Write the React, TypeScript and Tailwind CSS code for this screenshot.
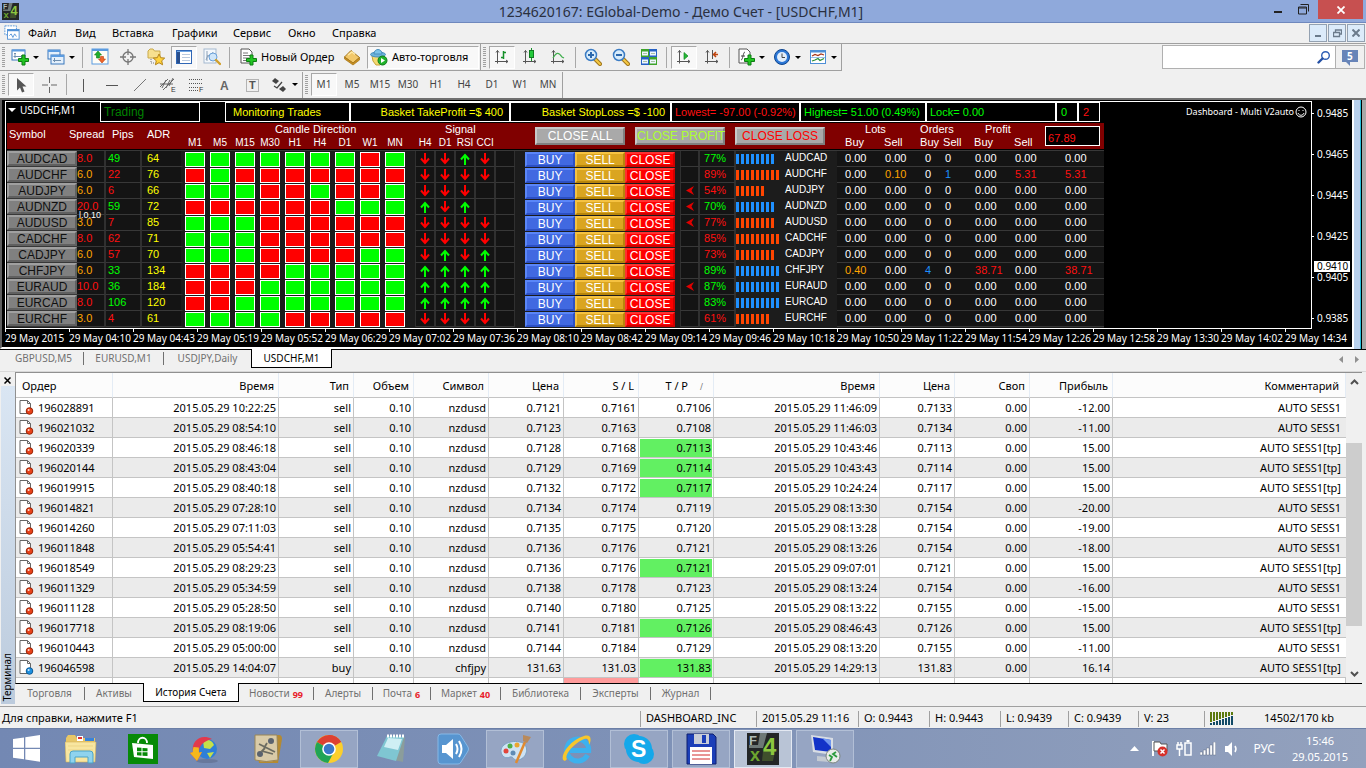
import React from "react";

type Kids = { children?: React.ReactNode };

/* ---------- icons ---------- */

function Icon({ children, size = 18, label }: Kids & { size?: number; label?: string }) {
  return (
    <svg width={size} height={size} viewBox="0 0 18 18" fill="none" className="shrink-0" role="img" aria-label={label}>
      {children}
    </svg>
  );
}

const Plus = () => <path d="M11 7h3v3.500h3.500v3H14V17h-3v-3.500H7.500v-3H11z" fill="#22c422" stroke="#0c7d12" strokeWidth="1" />;
const Axes = () => <path d="M4.500 2.500v13M2 13.500h13M3 4.500l1.500-2 1.500 2M13 12l2 1.500-2 1.500" stroke="#555" />;
const Magnifier = ({ plus, minus }: { plus?: boolean; minus?: boolean }) => (
  <>
    <path d="M11 11l5 5" stroke="#a0761c" strokeWidth="4" strokeLinecap="round" />
    <path d="M11 11l5 5" stroke="#f5c944" strokeWidth="2" strokeLinecap="round" />
    <circle cx="7" cy="7" r="5.500" fill="#d8ecfb" stroke="#3b7cc4" strokeWidth="1.500" />
    {(plus || minus) && <path d="M4 7h6" stroke="#2b68ad" strokeWidth="2" />}
    {plus && <path d="M7 4v6" stroke="#2b68ad" strokeWidth="2" />}
  </>
);

const icons = {
  newChart: (
    <>
      <rect x="1" y="2" width="13" height="10" fill="#fff" stroke="#3a78bd" />
      <path d="M1 2.500h13" stroke="#5b9be0" strokeWidth="2" />
      <path d="M4 10V5M2.500 8.500h9M3 6l1-1 1 1M10 7l1.500 1.500L10 10" stroke="#6f8fb0" />
      <Plus />
    </>
  ),
  profiles: (
    <>
      <rect x="1" y="2" width="12" height="9" fill="#e4f0fc" stroke="#3a78bd" />
      <path d="M1 3h12" stroke="#5b9be0" strokeWidth="2" />
      <rect x="4" y="7" width="13" height="9" fill="#e4f0fc" stroke="#3a78bd" />
      <path d="M4 8h13" stroke="#5b9be0" strokeWidth="2" />
      <path d="M6 12.500h8M7.500 10v4" stroke="#6f8fb0" />
    </>
  ),
  market: (
    <>
      <rect x="1" y="1" width="16" height="15" fill="#fffdf6" stroke="#5b9be0" />
      <path d="M1 2h16" stroke="#5b9be0" strokeWidth="2" />
      <path d="M7 3l3.500 4H8.500v3h-3V7h-2z" fill="#1fae2b" stroke="#0c7d12" strokeWidth=".6" />
      <path d="M11 15l-3.500-4h2V8.500h3V11h2z" fill="#f0662a" stroke="#b53c10" strokeWidth=".6" />
    </>
  ),
  target: (
    <g stroke="#777" strokeWidth="1.300">
      <circle cx="9" cy="9" r="5" />
      <path d="M9 1v6M9 11v6M1 9h6M11 9h6" />
    </g>
  ),
  folderStar: (
    <>
      <path d="M1 3l2-2h3l1.500 2H13v7H1z" fill="#f7e08f" stroke="#c9a94a" />
      <path d="M4 11v4h3" stroke="#777" strokeDasharray="1 1" />
      <path d="M12 6l1.700 3.700 4 .4-3 2.700.9 4L12 14.700 8.400 16.800l.9-4-3-2.700 4-.4z" fill="#ffd23c" stroke="#b5851a" />
    </>
  ),
  dataWindow: (
    <>
      <rect x="1.500" y="2.500" width="15" height="13" fill="#fff" stroke="#2f66b5" />
      <rect x="2" y="3" width="3" height="12" fill="#2a4f8c" />
      <path d="M7 6.500h8M7 9.500h8M7 12.500h8" stroke="#b9c9de" />
      <path d="M2 3.500h14" stroke="#6fa7e6" />
    </>
  ),
  tester: (
    <>
      <rect x="1" y="1" width="12" height="14" fill="#f4f8fc" stroke="#a5b9cf" />
      <path d="M3 12l2-5 2 3 3-6M4 3v10" stroke="#8ba0b7" />
      <circle cx="10" cy="9" r="4" fill="#cfe6fa" stroke="#6aa0d8" />
      <path d="M13 12l4 4" stroke="#d1a02c" strokeWidth="2.400" strokeLinecap="round" />
    </>
  ),
  newOrder: (
    <>
      <path d="M2 1h8l3 3v11H2z" fill="#fff" stroke="#555" />
      <path d="M4 5h5M4 7.500h7M4 10h6M4 12.500h3" stroke="#777" />
      <Plus />
    </>
  ),
  gold: (
    <>
      <path d="M1.500 9L8 2.500l8.500 7-6.500 5.500z" fill="#f2c86a" stroke="#a2741a" />
      <path d="M1.500 9v2l8.500 6 6.500-5v-2.500L10 15z" fill="#c98f1e" stroke="#a2741a" strokeWidth=".7" />
      <path d="M5 7l4-3 3 2.500" stroke="#ffeaa8" strokeWidth="1.500" />
    </>
  ),
  robot: (
    <>
      <path d="M2 8h12v4l-4 5H6l-3-4z" fill="#f4d970" stroke="#c9a43a" />
      <ellipse cx="8" cy="6.500" rx="7.500" ry="2.500" fill="#6db3dc" stroke="#4a90bd" />
      <path d="M4 6c0-6 8-6 8 0z" fill="#7fc4ea" stroke="#4a90bd" />
      <circle cx="12.500" cy="12.500" r="4.500" fill="#20b32b" stroke="#0d7a17" />
      <path d="M11 10l4 2.500-4 2.500z" fill="#fff" />
    </>
  ),
  bars: (<><Axes /><path d="M10.500 3v8M8 9.500h2.500M10.500 4.500H13" stroke="#16912a" strokeWidth="1.500" /></>),
  candle: (<><Axes /><path d="M10.500 0v13" stroke="#16912a" /><rect x="8.500" y="2.500" width="4" height="7" fill="#22c93a" stroke="#0e7d1f" /></>),
  line: (<><Axes /><path d="M4 10c3-5 5-7 9-1l2 1" stroke="#3fae4c" strokeWidth="1.300" /></>),
  zoomIn: <Magnifier plus />,
  zoomOut: <Magnifier minus />,
  tiles: (
    <>
      <rect x="1" y="1" width="8" height="8" fill="#3ea32b" /><rect x="9" y="1" width="8" height="8" fill="#2661c4" />
      <rect x="1" y="9" width="8" height="8" fill="#2661c4" /><rect x="9" y="9" width="8" height="8" fill="#3ea32b" />
      <path d="M2 5.500h6M10 5.500h6M2 13.500h6M10 13.500h6" stroke="#eef5ff" strokeWidth="4" />
      <path d="M3 5.500h4M11 5.500h4M3 13.500h4M11 13.500h4" stroke="#a9c4a4" />
    </>
  ),
  scroll: (<><Axes /><path d="M9 4.500l4 3.500-4 3.500z" fill="#25b836" stroke="#128a20" strokeWidth=".7" /></>),
  shift: (<><Axes /><path d="M9.500 2v9" stroke="#555" /><path d="M15 6.500h-4M13 4l-2.500 2.500L13 9" stroke="#c0440e" strokeWidth="1.500" /></>),
  indicator: (
    <>
      <path d="M2 1h8l3 3v11H2z" fill="#fff" stroke="#555" />
      <path d="M4 12c2 0 2-8 4-8M4 8h4" stroke="#444" />
      <Plus />
    </>
  ),
  clock: (
    <>
      <circle cx="9" cy="9" r="7.500" fill="#2c77d6" stroke="#0f468f" />
      <circle cx="9" cy="9" r="5" fill="#e2eefb" />
      <path d="M9 5.500V9.500h3" stroke="#444" />
    </>
  ),
  template: (
    <>
      <rect x="1.500" y="2.500" width="15" height="13" fill="#fff" stroke="#4d8fd6" />
      <path d="M1.500 3.500h15" stroke="#4d8fd6" strokeWidth="2" />
      <path d="M3 8l3-1.500 3 1 3-1.500 3 1" stroke="#a8361a" strokeWidth="1.300" />
      <path d="M3 13l3-1 3-1.500 2 2 4-2" stroke="#2a8f34" strokeWidth="1.300" />
      <path d="M2 9.500h14" stroke="#9cc0ea" />
    </>
  ),
  cursor: <path d="M5 2v12.500l3-3 2 5 2.500-1-2-5h4z" fill="#555" />,
  cross: <path d="M9.500 1v6M9.500 11v6M2 9h6M11 9h6" stroke="#666" />,
  vline: <path d="M8.500 3v13" stroke="#555" />,
  hline: <path d="M3 9.500h12" stroke="#555" />,
  trend: <path d="M3 15L15 3" stroke="#777" />,
  channel: (
    <>
      <path d="M1 11l8-8M4 14L15 3M1 8h13M3 12L7 4M7 12l4-8M10 10l4-8" stroke="#666" />
      <text x="12" y="16" fontSize="7" fill="#333" fontFamily="Liberation Sans">E</text>
    </>
  ),
  fibo: (
    <>
      <path d="M2 3.500h13M2 7.500h13M2 11.500h9M2 14.500h9" stroke="#555" strokeDasharray="1 1" />
      <text x="12" y="16" fontSize="7" fill="#333" fontFamily="Liberation Sans">F</text>
    </>
  ),
  textA: <text x="5" y="14" fontSize="12" fontWeight="bold" fill="#666" fontFamily="Liberation Sans">A</text>,
  label: (
    <>
      <rect x="3.500" y="3.500" width="12" height="12" stroke="#777" strokeDasharray="1 1" />
      <text x="6" y="13" fontSize="11" fontWeight="bold" fill="#555" fontFamily="Liberation Sans">T</text>
    </>
  ),
  arrows: (
    <>
      <path d="M2 5l3-3 4 3-3 3z" fill="#444" />
      <path d="M4 10l3 2 5-6" stroke="#444" strokeWidth="1.300" />
      <path d="M9 13l4-3 3 3-3 3z" fill="#444" />
    </>
  ),
};

function FxLogo({ size }: { size: number }) {
  return (
    <svg width={size} height={size} viewBox="0 0 32 32" className="shrink-0" aria-label="FX4" role="img">
      <rect width="32" height="32" fill="#232627" />
      <path d="M13 0h7l-4 15H2v-3h9z" fill="#6d7876" />
      <path d="M16 18h12l-2 10H15z" fill="#3f4f2c" />
      <text x="2" y="12" fontSize="13" fontWeight="bold" fill="#aebbb8" fontFamily="Liberation Sans">F</text>
      <text x="16" y="22" fontSize="24" fontWeight="bold" fill="#8cc63f" fontFamily="Liberation Sans">4</text>
      <text x="3" y="28" fontSize="18" fontWeight="bold" fill="#6da52f" fontFamily="Liberation Sans">x</text>
    </svg>
  );
}

/* ---------- toolbar parts ---------- */

const Grip = () => (
  <span className="mx-[2px] flex h-5 w-[3px] shrink-0 flex-col justify-between">
    {Array.from({ length: 10 }, (_, i) => (
      <span key={i} className="h-px w-full bg-[#a0a0a0]" />
    ))}
  </span>
);
const Sep = () => <span className="mx-[3px] h-[21px] w-px shrink-0 bg-[#a8a8a8]" />;
const Edge = () => <span className="h-[26px] w-px shrink-0 bg-[#a0a0a0]" />;
const Caret = () => (
  <svg width="6" height="3" viewBox="0 0 6 3" className="shrink-0"><path d="M0 0h6L3 3z" fill="#000" /></svg>
);

function Tool({ name, icon, on, menu }: { name: string; icon: React.ReactNode; on?: boolean; menu?: boolean }) {
  return (
    <button
      type="button"
      aria-label={name}
      className={
        "flex h-[23px] shrink-0 items-center justify-center gap-1 " +
        (menu ? "w-9 " : "mx-px w-[26px] ") +
        (on ? "border border-[#a8a8a8] border-r-white border-b-white bg-[#f8f8f8]" : "")
      }
    >
      <Icon>{icon}</Icon>
      {menu && <Caret />}
    </button>
  );
}

const menus = [
  ["Файл", "w-[47px]"], ["Вид", "w-[37px]"], ["Вставка", "w-[60px]"], ["Графики", "w-[61px]"],
  ["Сервис", "w-[55px]"], ["Окно", "w-11"], ["Справка", "w-14"],
];

function TitleBar() {
  return (
    <header className="flex h-[23px] shrink-0 items-start border-b border-[#6f88bd] bg-[#8fa9db]">
      <div className="w-24 pt-[3px] pl-[2px]"><FxLogo size={17} /></div>
      <h1 className="flex-1 pt-px text-center font-['Noto_Sans',sans-serif] text-[14px] leading-[22px] text-[#2a3040]">
        1234620167: EGlobal-Demo - Демо Счет - [USDCHF,M1]
      </h1>
      <div className="flex h-[19px] w-[100px] justify-end pr-[3px]">
        <button type="button" aria-label="Свернуть" className="flex w-5 items-end justify-center pb-[6px]"><span className="h-[2px] w-2 bg-[#222]" /></button>
        <button type="button" aria-label="Восстановить" className="flex w-[30px] items-center justify-center">
          <svg width="11" height="11" viewBox="0 0 11 11" fill="none"><path d="M2.500 .5h8v7M.5 3h8v7h-8zM.5 4h8" stroke="#222" /></svg>
        </button>
        <button type="button" aria-label="Закрыть" className="flex w-[45px] items-center justify-center bg-[#c75050]">
          <svg width="8" height="8" viewBox="0 0 8 8"><path d="M.5 .5l7 7M7.500 .5l-7 7" stroke="#fff" strokeWidth="1.800" /></svg>
        </button>
      </div>
    </header>
  );
}

function MenuBar() {
  const win = "flex h-[18px] w-[18px] items-center justify-center border border-[#93a1b1] bg-[#dcebfa]";
  return (
    <nav className="flex h-[21px] shrink-0 items-center border-b border-[#a0a0a0] bg-[#f0f0f0]">
      <div className="w-7 pl-1">
        <Icon size={16} label="График">
          <rect x="1" y="1" width="13" height="10" fill="#fff" stroke="#4d8fd6" strokeDasharray="2 1" />
          <rect x="4" y="5" width="13" height="11" fill="#fff" stroke="#4d8fd6" />
          <path d="M4 6h13" stroke="#4d8fd6" strokeWidth="2" />
          <path d="M6 12l2-2 2 4 2-4 2 3" stroke="#4d8fd6" />
        </Icon>
      </div>
      {menus.map(([m, w]) => (
        <button key={m} type="button" className={"text-left font-['Noto_Sans',sans-serif] text-[11px] leading-4 text-black " + w}>{m}</button>
      ))}
      <div className="ml-auto flex gap-px pr-px">
        <button type="button" aria-label="Свернуть график" className={win}><span className="mt-[6px] h-[2px] w-[6px] bg-[#6b7b8c]" /></button>
        <button type="button" aria-label="Восстановить график" className={win}>
          <svg width="9" height="9" viewBox="0 0 9 9" fill="none"><path d="M2.500 3V1h6v4H7M.5 3.500h6v4h-6z" stroke="#6b7b8c" strokeWidth="1.300" /></svg>
        </button>
        <button type="button" aria-label="Закрыть график" className={win}>
          <svg width="8" height="8" viewBox="0 0 8 8"><path d="M.5 .5l7 7M7.500 .5l-7 7" stroke="#6b7b8c" strokeWidth="2" /></svg>
        </button>
      </div>
    </nav>
  );
}

function Toolbars() {
  const label = "font-['Noto_Sans',sans-serif] text-[11px] text-black whitespace-nowrap";
  return (
    <div className="flex h-[54px] shrink-0 items-start bg-[#f0f0f0]">
      <div className="flex min-w-0 flex-1 flex-col">
        <div className="flex h-[27px] items-center self-start border-b border-[#a0a0a0]">
          <Grip />
          <Tool name="Новый график" icon={icons.newChart} menu />
          <Tool name="Профили" icon={icons.profiles} menu />
          <Sep />
          <Tool name="Обзор рынка" icon={icons.market} />
          <Tool name="Прицел" icon={icons.target} />
          <Tool name="Навигатор" icon={icons.folderStar} />
          <Tool name="Терминал" icon={icons.dataWindow} on />
          <Tool name="Тестер" icon={icons.tester} />
          <Sep />
          <button type="button" className="flex h-[23px] w-[105px] shrink-0 items-center gap-1 pl-[6px]"><Icon>{icons.newOrder}</Icon><span className={label}>Новый Ордер</span></button>
          <Tool name="Редактор" icon={icons.gold} />
          <button type="button" className="mx-px flex h-[23px] w-[112px] shrink-0 items-center gap-1 border border-[#a8a8a8] border-r-white border-b-white bg-[#f8f8f8] pl-[2px]"><Icon>{icons.robot}</Icon><span className={label}>Авто-торговля</span></button>
          <Edge />
          <Grip />
          <Tool name="Бары" icon={icons.bars} on />
          <Tool name="Свечи" icon={icons.candle} />
          <Tool name="Линия" icon={icons.line} />
          <Sep />
          <Tool name="Увеличить" icon={icons.zoomIn} />
          <Tool name="Уменьшить" icon={icons.zoomOut} />
          <Tool name="Плитка" icon={icons.tiles} />
          <Sep />
          <Tool name="Автопрокрутка" icon={icons.scroll} on />
          <Tool name="Сдвиг" icon={icons.shift} />
          <Sep />
          <Tool name="Индикаторы" icon={icons.indicator} menu />
          <Tool name="Периоды" icon={icons.clock} menu />
          <Tool name="Шаблоны" icon={icons.template} menu />
          <Edge />
        </div>
        <div className="flex h-[27px] items-center">
          <Grip />
          <Tool name="Курсор" icon={icons.cursor} on />
          <Tool name="Перекрестие" icon={icons.cross} />
          <Sep />
          <Tool name="Вертикальная" icon={icons.vline} />
          <Tool name="Горизонтальная" icon={icons.hline} />
          <Tool name="Трендовая" icon={icons.trend} />
          <Tool name="Канал" icon={icons.channel} />
          <Tool name="Фибоначчи" icon={icons.fibo} />
          <Tool name="Текст" icon={icons.textA} />
          <Tool name="Метка" icon={icons.label} />
          <Tool name="Стрелки" icon={icons.arrows} menu />
          <Edge />
          <Grip />
          {["M1", "M5", "M15", "M30", "H1", "H4", "D1", "W1", "MN"].map((t, i) => (
            <button
              key={t}
              type="button"
              className={
                "mx-px h-[23px] w-[26px] shrink-0 text-center font-['Noto_Sans',sans-serif] text-[10px] text-[#444] " +
                (i === 0 ? "border border-[#a8a8a8] border-r-white border-b-white bg-[#f8f8f8]" : "")
              }
            >
              {t}
            </button>
          ))}
          <Edge />
        </div>
      </div>
      <div className="mt-px mr-px flex h-6 w-[203px] shrink-0 border border-[#b0b0b0] bg-white">
        <input aria-label="Поиск" className="min-w-0 flex-1 bg-white px-1 text-xs outline-none" />
        <button type="button" aria-label="Искать" className="w-[18px]">
          <svg width="14" height="14" viewBox="0 0 14 14" fill="none"><circle cx="8.500" cy="5.500" r="3.800" stroke="#2f5fb5" strokeWidth="1.400" /><path d="M5.500 8.500L1.500 12.500" stroke="#2450a5" strokeWidth="2.400" strokeLinecap="round" /></svg>
        </button>
        <button type="button" aria-label="Сообщения" className="flex w-[29px] items-center justify-center border-l border-[#b0b0b0] bg-[#f0f0f0]">
          <svg width="16" height="17" viewBox="0 0 16 17"><path d="M0 1h16v12H8v4l-4-4H0z" fill="#6784b8" /><text x="5" y="11" fontSize="10" fontWeight="bold" fill="#fff" fontFamily="Noto Sans">5</text></svg>
        </button>
      </div>
    </div>
  );
}

/* ---------- chart dashboard ---------- */

const R = "text-[#ff1010]", G = "text-[#00ff00]", O = "text-[#ffa500]", B = "text-[#1e90ff]", W = "text-white";

type Pair = { s: string; spread: string; sc: string; pips: string; pc: string; adr: string; c: string; sig: string; flag?: boolean; pct: string; tc: string; n: number; blue?: boolean };
const pairs: Pair[] = [
  { s: "AUDCAD", spread: "8.0", sc: R, pips: "49", pc: G, adr: "64", c: "111111101", sig: "DDUD", pct: "77%", tc: G, n: 8, blue: true },
  { s: "AUDCHF", spread: "6.0", sc: O, pips: "22", pc: R, adr: "76", c: "010000000", sig: "DDDD", pct: "89%", tc: R, n: 9 },
  { s: "AUDJPY", spread: "6.0", sc: O, pips: "6", pc: R, adr: "66", c: "111001001", sig: "DDD-", flag: true, pct: "54%", tc: R, n: 6 },
  { s: "AUDNZD", spread: "20.0", sc: R, pips: "59", pc: G, adr: "72", c: "000000111", sig: "UDU-", flag: true, pct: "70%", tc: G, n: 8, blue: true },
  { s: "AUDUSD", spread: "3.0", sc: O, pips: "7", pc: R, adr: "85", c: "111000000", sig: "DDDD", flag: true, pct: "77%", tc: R, n: 8 },
  { s: "CADCHF", spread: "8.0", sc: R, pips: "62", pc: R, adr: "71", c: "111000000", sig: "DDDD", pct: "85%", tc: R, n: 9 },
  { s: "CADJPY", spread: "6.0", sc: O, pips: "57", pc: R, adr: "70", c: "111000011", sig: "DUDU", pct: "73%", tc: R, n: 8 },
  { s: "CHFJPY", spread: "6.0", sc: O, pips: "33", pc: G, adr: "134", c: "000011111", sig: "UUUU", pct: "89%", tc: G, n: 9, blue: true },
  { s: "EURAUD", spread: "10.0", sc: R, pips: "36", pc: G, adr: "184", c: "000111111", sig: "UUUU", flag: true, pct: "87%", tc: G, n: 9, blue: true },
  { s: "EURCAD", spread: "8.0", sc: R, pips: "106", pc: G, adr: "120", c: "001111111", sig: "UUUU", pct: "83%", tc: G, n: 9, blue: true },
  { s: "EURCHF", spread: "3.0", sc: O, pips: "4", pc: R, adr: "61", c: "111100000", sig: "DDDD", pct: "61%", tc: R, n: 7 },
];

const money: Record<string, [string, string][]> = {
  AUDCHF: [["0.00", W], ["0.10", O], ["0", W], ["1", B], ["0.00", W], ["5.31", R], ["5.31", R]],
  CHFJPY: [["0.40", O], ["0.00", W], ["4", B], ["0", W], ["38.71", R], ["0.00", W], ["38.71", R]],
};
const flat: [string, string][] = [["0.00", W], ["0.00", W], ["0", W], ["0", W], ["0.00", W], ["0.00", W], ["0.00", W]];
const moneyPad = ["pl-2", "pl-[5px]", "pl-[5px]", "pl-1", "pl-[5px]", "pl-[5px]", "pl-[22px]"];

const Arrow = ({ up }: { up: boolean }) => (
  <svg width="10" height="12" viewBox="0 0 10 12" fill="none" className="mx-auto block">
    {up ? <path d="M5 12V2M1 6.500L5 2l4 4.500" stroke="#0f0" strokeWidth="2" /> : <path d="M5 0v10M1 5.500L5 10l4-4.500" stroke="#f00" strokeWidth="2" />}
  </svg>
);

const cell = "h-4 border-b border-[#383838] bg-[#141414] p-0 text-left leading-[15px]";
const plain = "h-4 bg-[#1c1c1c] p-0";
const cols = [
  "w-[70px]", "w-[29px]", "w-9", "w-[42px]",
  "w-[25px]", "w-[25px]", "w-[25px]", "w-[25px]", "w-[25px]", "w-[25px]", "w-[25px]", "w-[25px]", "w-[31px]",
  "w-5", "w-5", "w-5", "w-5", "w-5", "w-[10px]",
  "w-[50px]", "w-[50px]", "w-[50px]", "w-[5px]",
  "w-5", "w-9", "w-[49px]", "w-[52px]",
  "w-[43px]", "w-10", "w-[21px]", "w-[29px]", "w-10", "w-[33px]", "w-[61px]",
];

function Dashboard() {
  const head = "p-0 text-left font-normal leading-[13px]";
  const big = "h-[18px] w-[90px] shrink-0 whitespace-nowrap border-2 border-t-[#c8c8c8] border-l-[#c8c8c8] border-r-[#808080] border-b-[#808080] bg-[#a9a9a9] text-center text-[12px] leading-[15px]";
  const btn = "block h-[15px] w-full border-2 text-center text-[12px] leading-[12px]";
  return (
    <table className="ml-px w-[1097px] table-fixed border-separate border-spacing-0 text-[11px] text-white">
      <colgroup>{cols.map((w, i) => <col key={i} className={w} />)}</colgroup>
      <thead className="bg-[#800000]">
        <tr className="h-[13px]">
          <th rowSpan={2} className={head + " pb-1 pl-[2px]"}>Symbol</th>
          <th rowSpan={2} className={head + " pb-1"}><span className="-ml-2">Spread</span></th>
          <th rowSpan={2} className={head + " pb-1 pl-[6px]"}>Pips</th>
          <th rowSpan={2} className={head + " pb-1 pl-[5px]"}>ADR</th>
          <th colSpan={9} className={head + " pl-[91px]"}>Candle Direction</th>
          <th colSpan={6} className={head + " pl-[30px]"}>Signal</th>
          <th colSpan={8} rowSpan={2} className={head}>
            <div className="flex gap-[10px] pl-[10px]">
              <button type="button" className={big + " text-white"}>CLOSE ALL</button>
              <button type="button" className={big + " text-[#adff2f]"}>CLOSE PROFIT</button>
              <button type="button" className={big + " text-[#ff0000]"}>CLOSE LOSS</button>
            </div>
          </th>
          <th colSpan={2} className={head + " pl-7"}>Lots</th>
          <th colSpan={2} className={head}>Orders</th>
          <th colSpan={2} className={head + " pl-[15px]"}>Profit</th>
          <th rowSpan={2} className={head}>
            <div className="ml-[2px] h-5 w-[55px] border border-white bg-black pl-[2px] leading-[22px] text-[#ff1010]">67.89</div>
          </th>
        </tr>
        <tr className="h-[13px]">
          {["M1", "M5", "M15", "M30", "H1", "H4", "D1", "W1", "MN"].map((t) => (
            <th key={t} className={head + " whitespace-nowrap"}><span className="block w-[22px] text-center text-[10px]">{t}</span></th>
          ))}
          {["H4", "D1", "RSI", "CCI"].map((t) => <th key={t} className={head}><span className="block text-center text-[10px]">{t}</span></th>)}
          <th className={head} /><th className={head} />
          {["Buy", "Sell", "Buy", "Sell", "Buy", "Sell"].map((t, i) => (
            <th key={i} className={head + (i === 0 ? " pl-2" : i === 2 ? " pl-0" : i === 3 ? " pl-[2px]" : " pl-1")}>{t}</th>
          ))}
        </tr>
      </thead>
      <tbody>
        <tr aria-hidden="true"><td colSpan={34} className="h-[2px] border-t border-black bg-[#383838] p-0" /></tr>
        {pairs.map((p) => (
          <tr key={p.s} className="h-4">
            <td className={cell}>
              <button type="button" className={btn + " border-t-[#a0a0a0] border-l-[#a0a0a0] border-r-[#606060] border-b-[#606060] bg-[#808080] text-[#101010]"}>{p.s}</button>
            </td>
            <td className={cell + " relative border-r-[2px] border-r-[#303030] " + p.sc}>
              {p.spread}
              {p.s === "AUDUSD" && <span className="absolute -top-[6px] left-[2px] text-[9px] leading-3 text-white">l.0.10</span>}
            </td>
            <td className={cell + " border-r-[2px] border-r-[#303030] pl-[2px] " + p.pc}>{p.pips}</td>
            <td className={cell + " border-r-[3px] border-r-[#1c1c1c] pl-[5px] text-[#ffff00]"}>{p.adr}</td>
            {p.c.split("").map((c, i) => (
              <td key={i} className={plain}>
                <span className={"ml-px block h-[15px] w-5 border border-white " + (c === "1" ? "bg-[#00ff00]" : "bg-[#ff0000]")} />
              </td>
            ))}
            {[0, 1, 2, 3, 4].map((i) => (
              <td key={i} className={cell + " border-r border-l border-r-[#303030] border-l-[#303030]"}>
                {p.sig[i] && p.sig[i] !== "-" ? <Arrow up={p.sig[i] === "U"} /> : null}
              </td>
            ))}
            <td className={plain} />
            <td className={plain}><button type="button" className={btn + " border-t-[#5a86f8] border-l-[#5a86f8] border-r-[#2c50c4] border-b-[#2c50c4] bg-[#4169e1]"}>BUY</button></td>
            <td className={plain}><button type="button" className={btn + " border-t-[#f5c242] border-l-[#f5c242] border-r-[#b8860b] border-b-[#b8860b] bg-[#daa520]"}>SELL</button></td>
            <td className={plain}><button type="button" className={btn + " border-t-[#ff3030] border-l-[#ff3030] border-r-[#d00000] border-b-[#d00000] bg-[#ff0000]"}>CLOSE</button></td>
            <td className={plain} />
            <td className={cell + " border-r-2 border-l border-r-[#303030] border-l-[#303030]"}>
              {p.flag && <svg width="8" height="9" viewBox="0 0 8 9" className="ml-[5px] block"><path d="M0 4.500L8 0 5.500 4.500 8 9z" fill="#e00000" /></svg>}
            </td>
            <td className={cell + " border-r-2 border-r-[#303030] pl-1 " + p.tc}>{p.pct}</td>
            <td className={plain}>
              <span className="flex h-[10px] gap-[2px]">
                {Array.from({ length: p.n }, (_, i) => <span key={i} className={"w-[3px] " + (p.blue ? "bg-[#1e90ff]" : "bg-[#ff4500]")} />)}
              </span>
            </td>
            <td className={plain + " align-top text-[10px] leading-[13px]"}>{p.s}</td>
            {(money[p.s] || flat).map(([v, c], i) => (
              <td key={i} className={cell + " " + moneyPad[i] + " " + c}>{v}</td>
            ))}
          </tr>
        ))}
        <tr aria-hidden="true"><td colSpan={34} className="h-[2px] bg-[#1c1c1c] p-0" /></tr>
      </tbody>
    </table>
  );
}

const times = ["2015", "04:10", "04:43", "05:19", "05:52", "06:29", "07:02", "07:36", "08:10", "08:42", "09:14", "09:46", "10:18", "10:50", "11:22", "11:54", "12:26", "12:58", "13:30", "14:02", "14:34"];

function Chart() {
  const box = "flex h-5 shrink-0 items-center border border-white whitespace-nowrap";
  const axis = "font-['Noto_Sans',sans-serif] text-[10px] leading-3 text-white whitespace-nowrap";
  return (
    <section className="flex shrink-0 border-t-2 border-b border-t-[#707070] border-b-black bg-[#f0f0f0] font-['Liberation_Sans',sans-serif]">
      <div className="min-w-0 flex-1 border-b-2 border-l-2 border-b-white border-l-[#606060] bg-black pt-px pl-[3px]">
        <div className="flex">
          <div className="h-[228px] min-w-0 flex-1 overflow-hidden border border-white">
            <div className="flex">
              <div className="flex w-[94px] shrink-0 items-start gap-1 pt-[2px] pl-[2px]">
                <span className="pt-1"><svg width="8" height="4" viewBox="0 0 8 4"><path d="M0 0h8L4 4z" fill="#fff" /></svg></span>
                <span className={axis}>USDCHF,M1</span>
              </div>
              <div className={box + " w-[100px] pl-[3px] text-[12px] text-[#008000]"}>Trading</div>
              <div className="w-[25px] shrink-0" />
              <div className={box + " w-[125px] pl-[7px] text-[11px] text-[#ffff00]"}>Monitoring Trades</div>
              <div className={box + " w-40 justify-end pr-[6px] text-[11px] text-[#ffff00]"}>Basket TakeProfit =$ 400</div>
              <div className={box + " w-[161px] justify-end pr-[5px] text-[11px] text-[#ffff00]"}>Basket StopLoss =$ -100</div>
              <div className={box + " w-[129px] pl-[3px] text-[11px] text-[#ff1010]"}>Lowest= -97.00 (-0.92%)</div>
              <div className={box + " w-[126px] pl-[3px] text-[11px] text-[#00ff00]"}>Highest= 51.00 (0.49%)</div>
              <div className={box + " w-[130px] pl-[3px] text-[11px] text-[#00ff00]"}>Lock= 0.00</div>
              <div className={box + " w-[22px] pl-1 text-[11px] text-[#00ff00]"}>0</div>
              <div className={box + " w-[22px] pl-1 text-[11px] text-[#ff1010]"}>2</div>
              <div className="flex min-w-0 flex-1 items-center justify-end gap-px pr-1">
                <span className="font-['Noto_Sans',sans-serif] text-[9px] leading-3 whitespace-nowrap text-white">Dashboard - Multi V2auto</span>
                <svg width="12" height="12" viewBox="0 0 12 12" fill="none" stroke="#fff"><circle cx="6" cy="6" r="5" /><path d="M3 7c1 3 5 3 6 0M4 4v1M8 4v1" /></svg>
              </div>
            </div>
            <div className="h-px" />
            <Dashboard />
          </div>
          <div className="relative w-10 shrink-0">
            {[["0.9485", "top-[6px]"], ["0.9465", "top-[47px]"], ["0.9445", "top-[88px]"], ["0.9425", "top-[129px]"], ["0.9405", "top-[170px]"], ["0.9385", "top-[211px]"]].map(([v, t]) => (
              <div key={v} className={"absolute left-0 flex items-center gap-[3px] " + t}>
                <span className="h-px w-[2px] bg-white" /><span className={axis}>{v}</span>
              </div>
            ))}
            <div className="absolute top-[160px] left-[2px] w-9 bg-white pl-[3px] font-['Noto_Sans',sans-serif] text-[10px] leading-[11px] text-black">0.9410</div>
          </div>
        </div>
        <div className="flex h-[18px] overflow-hidden">
          {times.map((t) => (
            <div key={t} className="w-16 shrink-0">
              <div className="h-[3px] w-px bg-white" />
              <div className={axis}>29 May {t}</div>
            </div>
          ))}
        </div>
      </div>
      <div className="w-[2px] bg-white" />
      <div className="w-[7px] border-r border-[#27c0dc] bg-[#b8d0ec]" />
      <div className="w-[5px] border-l border-black bg-[#a8a8a8]" />
    </section>
  );
}

function ChartTabs() {
  const tab = "h-[17px] font-['Noto_Sans',sans-serif] text-[10px] leading-[17px] text-[#707070] whitespace-nowrap text-center";
  const bar = "mt-[2px] h-[13px] w-px bg-[#707070]";
  return (
    <div className="flex h-[22px] shrink-0 items-start border-b border-[#d8d8d8] bg-[#f0f0f0]" role="tablist">
      <button type="button" role="tab" className={tab + " ml-1 w-[79px]"}>GBPUSD,M5</button><span className={bar} />
      <button type="button" role="tab" className={tab + " w-[79px]"}>EURUSD,M1</button><span className={bar} />
      <button type="button" role="tab" className={tab + " w-[87px]"}>USDJPY,Daily</button>
      <button type="button" role="tab" aria-selected="true" className="-mt-px h-[19px] w-[81px] border border-t-0 border-black bg-white text-center font-['Noto_Sans',sans-serif] text-[10px] whitespace-nowrap text-black">USDCHF,M1</button>
      <div className="ml-auto flex gap-3 pt-[6px] pr-[7px]">
        <svg width="4" height="7" viewBox="0 0 4 7"><path d="M4 0v7L0 3.500z" fill="#909090" /></svg>
        <svg width="4" height="7" viewBox="0 0 4 7"><path d="M0 0v7l4-3.500z" fill="#909090" /></svg>
      </div>
    </div>
  );
}

/* ---------- terminal ---------- */

const T1 = "2015.05.29 ";
const orders: [string, string, string, string, string, string, string, string, string, string, boolean][] = [
  ["196028891", "10:22:25", "sell", "nzdusd", "0.7121", "0.7161", "0.7106", "11:46:09", "0.7133", "-12.00", false],
  ["196021032", "08:54:10", "sell", "nzdusd", "0.7123", "0.7163", "0.7108", "11:46:03", "0.7134", "-11.00", false],
  ["196020339", "08:46:18", "sell", "nzdusd", "0.7128", "0.7168", "0.7113", "10:43:46", "0.7113", "15.00", true],
  ["196020144", "08:43:04", "sell", "nzdusd", "0.7129", "0.7169", "0.7114", "10:43:43", "0.7114", "15.00", true],
  ["196019915", "08:40:18", "sell", "nzdusd", "0.7132", "0.7172", "0.7117", "10:24:24", "0.7117", "15.00", true],
  ["196014821", "07:28:10", "sell", "nzdusd", "0.7134", "0.7174", "0.7119", "08:13:30", "0.7154", "-20.00", false],
  ["196014260", "07:11:03", "sell", "nzdusd", "0.7135", "0.7175", "0.7120", "08:13:28", "0.7154", "-19.00", false],
  ["196011848", "05:54:41", "sell", "nzdusd", "0.7136", "0.7176", "0.7121", "08:13:26", "0.7154", "-18.00", false],
  ["196018549", "08:29:23", "sell", "nzdusd", "0.7136", "0.7176", "0.7121", "09:07:01", "0.7121", "15.00", true],
  ["196011329", "05:34:59", "sell", "nzdusd", "0.7138", "0.7178", "0.7123", "08:13:24", "0.7154", "-16.00", false],
  ["196011128", "05:28:50", "sell", "nzdusd", "0.7140", "0.7180", "0.7125", "08:13:22", "0.7155", "-15.00", false],
  ["196017718", "08:19:06", "sell", "nzdusd", "0.7141", "0.7181", "0.7126", "08:46:43", "0.7126", "15.00", true],
  ["196010443", "05:00:00", "sell", "nzdusd", "0.7144", "0.7184", "0.7129", "08:13:20", "0.7155", "-11.00", false],
  ["196046598", "14:04:07", "buy", "chfjpy", "131.63", "131.03", "131.83", "14:29:13", "131.83", "16.14", true],
];

const DocIcon = ({ buy }: { buy: boolean }) => (
  <svg width="15" height="15" viewBox="0 0 15 15" className="shrink-0">
    <path d="M1 .5h7.500l3 3v10H1z" fill="#fff" stroke="#666" /><path d="M8.500 .5v3h3" fill="none" stroke="#666" />
    <circle cx="10.500" cy="11" r="3.300" fill={buy ? "#1e90e0" : "#e8431a"} stroke={buy ? "#0d5c99" : "#9c2506"} />
    <circle cx="9.600" cy="10" r="1" fill="#fff" opacity=".8" />
  </svg>
);

const orderCols = ["w-[97px]", "w-[166px]", "w-[75px]", "w-[60px]", "w-[75px]", "w-[75px]", "w-[75px]", "w-[75px]", "w-[166px]", "w-[75px]", "w-[75px]", "w-[83px]", ""];
const orderHeads = ["Ордер", "Время", "Тип", "Объем", "Символ", "Цена", "S / L", "T / P", "Время", "Цена", "Своп", "Прибыль", "Комментарий"];

const footTabs: [string, string, string?][] = [
  ["Новости", "w-[74px]", "99"], ["Алерты", "w-[58px]"], ["Почта", "w-[57px]", "6"], ["Маркет", "w-[69px]", "40"],
  ["Библиотека", "w-[79px]"], ["Эксперты", "w-[69px]"], ["Журнал", "w-[59px]"],
];

function Terminal() {
  const td = "h-5 border-r border-b border-[#c4c4c4] p-0 pr-[2px] text-right whitespace-nowrap";
  const foot = "h-5 pb-px text-center text-[10px] text-[#707070] whitespace-nowrap shrink-0";
  return (
    <section className="flex min-h-0 flex-1 bg-[#f0f0f0] font-['Noto_Sans',sans-serif]">
      <aside className="flex w-[15px] shrink-0 flex-col pt-[2px]">
        <button type="button" aria-label="Закрыть терминал" className="flex h-3 items-center justify-center">
          <svg width="7" height="7" viewBox="0 0 7 7"><path d="M.5 .5l6 6M6.500 .5l-6 6" stroke="#000" strokeWidth="1.500" /></svg>
        </button>
        <div className="mb-[2px] ml-px flex min-h-0 flex-1 items-end bg-linear-to-b from-[#dae6f3] to-[#bccbdd] pb-[3px]">
          <span className="rotate-180 text-[10px] leading-[13px] text-black [writing-mode:vertical-rl]">Терминал</span>
        </div>
      </aside>
      <div className="flex min-w-0 flex-1 flex-col pr-1">
        <div className="flex min-h-0 flex-1 overflow-hidden border-t border-b border-l border-t-[#909090] border-b-black border-l-[#909090] bg-white">
          <table className="h-fit min-w-0 flex-1 table-fixed border-separate border-spacing-0 text-[11px] leading-[19px] text-black">
            <colgroup>{orderCols.map((w, i) => <col key={i} className={w} />)}</colgroup>
            <thead>
              <tr>
                {orderHeads.map((h, i) => (
                  <th key={i} className={"h-[25px] border-r border-b border-r-[#e4ecf5] border-b-[#c4c4c4] bg-[#fcfcfc] p-0 font-normal whitespace-nowrap " + (i === 0 ? "pl-[6px] text-left" : i === 12 ? "pr-[6px] text-right" : "pr-1 text-right")}>
                    {h}{i === 7 && <span className="pr-[6px] pl-3 text-[8px] leading-none text-[#777]">/</span>}
                  </th>
                ))}
              </tr>
            </thead>
            <tbody>
              {orders.map((o, r) => (
                <tr key={o[0]} className={r % 2 ? "bg-[#ebebeb]" : "bg-white"}>
                  <td className={td}><div className="flex items-center gap-1 pl-[3px]"><DocIcon buy={o[2] === "buy"} />{o[0]}</div></td>
                  <td className={td}>{T1 + o[1]}</td>
                  <td className={td}>{o[2]}</td>
                  <td className={td}>0.10</td>
                  <td className={td}>{o[3]}</td>
                  <td className={td}>{o[4]}</td>
                  <td className={td}>{o[5]}</td>
                  <td className="h-5 border-r border-b border-[#c4c4c4] p-0 pr-px pl-px text-right"><span className={"block h-[18px] pr-px leading-[18px] " + (o[10] ? "bg-[#62f062]" : "")}>{o[6]}</span></td>
                  <td className={td}>{T1 + o[7]}</td>
                  <td className={td}>{o[8]}</td>
                  <td className={td}>0.00</td>
                  <td className={td}>{o[9]}</td>
                  <td className="h-5 border-b border-[#c4c4c4] p-0 pr-[5px] text-right whitespace-nowrap">{"AUTO SESS1" + (o[10] ? "[tp]" : "")}</td>
                </tr>
              ))}
              <tr aria-hidden="true">
                {orderCols.map((_, i) => <td key={i} className={"h-5 border-r border-[#c4c4c4] p-0 " + (i === 6 ? "bg-[#ff9c9c]" : "")} />)}
              </tr>
            </tbody>
          </table>
          <div className="flex w-4 shrink-0 flex-col items-center bg-[#f0f0f0]">
            <svg width="9" height="17" viewBox="0 0 9 17" fill="none"><path d="M1 11l3.500-3.500L8 11" stroke="#505050" strokeWidth="2" /></svg>
            <div className="mt-[53px] h-[183px] w-4 bg-[#cdcdcd]" />
            <svg width="9" height="14" viewBox="0 0 9 14" fill="none" className="mt-auto"><path d="M1 3l3.500 3.500L8 3" stroke="#505050" strokeWidth="2" /></svg>
          </div>
        </div>
        <div className="flex h-[22px] shrink-0 items-start" role="tablist">
          <button type="button" role="tab" className={foot + " w-[69px]"}>Торговля</button>
          <span className="mt-[3px] h-[13px] w-px bg-[#707070]" />
          <button type="button" role="tab" className={foot + " w-[58px]"}>Активы</button>
          <button type="button" role="tab" aria-selected="true" className="-mt-px h-[19px] w-24 shrink-0 border border-t-0 border-black bg-white text-center text-[10px] whitespace-nowrap text-black">История Счета</button>
          {footTabs.map(([t, w, n]) => (
            <React.Fragment key={t}>
              <button type="button" role="tab" className={foot + " " + w}>
                {t}{n && <span className="ml-[3px] align-[-1px] text-[9px] leading-none font-bold text-[#e8202a]">{n}</span>}
              </button>
              <span className="mt-[3px] h-[13px] w-px shrink-0 bg-[#707070]" />
            </React.Fragment>
          ))}
        </div>
      </div>
    </section>
  );
}

function StatusBar() {
  const item = "flex h-4 items-center border-l border-[#a0a0a0] pl-[5px] whitespace-nowrap shrink-0 ";
  return (
    <footer className="flex h-[22px] shrink-0 items-center border-t border-[#a0a0a0] bg-[#f0f0f0] pt-[2px] font-['Noto_Sans',sans-serif] text-[11px] text-black">
      <span className="min-w-0 flex-1 pl-[2px]">Для справки, нажмите F1</span>
      <span className={item + "w-[116px]"}>DASHBOARD_INC</span>
      <span className={item + "w-[102px]"}>2015.05.29 11:16</span>
      <span className={item + "w-[71px]"}>O: 0.9443</span>
      <span className={item + "w-[71px]"}>H: 0.9443</span>
      <span className={item + "w-[68px]"}>L: 0.9439</span>
      <span className={item + "w-[70px]"}>C: 0.9439</span>
      <span className={item + "w-[66px]"}>V: 23</span>
      <span className={item + "w-[162px] justify-between pr-8"}>
        <svg width="24" height="13" viewBox="0 0 24 13">
          {Array.from({ length: 8 }, (_, i) => (
            <g key={i}><rect x={i * 3} y="0" width="2" height={10 - i} fill="#5c7a0e" /><rect x={i * 3} y={11 - i} width="2" height={2 + i} fill="#124a66" /></g>
          ))}
        </svg>
        14502/170 kb
      </span>
    </footer>
  );
}

/* ---------- taskbar ---------- */

const apps: { name: string; run?: boolean; active?: boolean; art: React.ReactNode }[] = [
  { name: "Проводник", art: (<>
    <path d="M1 5l2-3h7l2 3h18v23H1z" fill="#e8c766" /><path d="M12 3h6v5h-6z" fill="#fff" /><path d="M13 4h4v2h-4z" fill="#d33" /><path d="M20 5h9v3h-9z" fill="#3a83d8" />
    <path d="M0 9h31l-1 20H1z" fill="#f8e6a0" stroke="#d4b45a" strokeWidth=".6" /><path d="M3 13h25M3 17h25" stroke="#ecd587" /><path d="M5 30V21q0-3 3-3h17q3 0 3 3v9h-5v-6H10v6z" fill="#8fd3ee" stroke="#4ba3c8" /></>) },
  { name: "Магазин", art: (<>
    <rect x="1" y="1" width="30" height="30" fill="#078a07" /><path d="M5 10l21 2v14L7 24z" fill="#fff" /><path d="M11 10c0-7 9-7 9 0" fill="none" stroke="#fff" strokeWidth="1.800" />
    <path d="M10 14.500l4.500 .3v3.400H10zM15.500 15l5 .3v3h-5zM10 19.200h4.500v3.600l-4.500-.5zM15.500 19.200h5v3.900l-5-.3z" fill="#078a07" /></>) },
  { name: "Загрузчик", art: (<>
    <ellipse cx="18" cy="28" rx="11" ry="2" fill="#5f6d8c" opacity=".6" />
    <circle cx="18" cy="16" r="10" fill="#2f7fd8" /><path d="M14 8q8-3 11 4l-4 4-6-1zM18 20l7-1-4 6z" fill="#c5e04a" />
    <path d="M23 6C11 0 2 9 4 19l-3 1 7 8 5-9-3 .5C10 12 15 8 23 6z" fill="#e23a4c" /><path d="M4.500 14q-1 3-.5 5l-3 1 7 8 5-9-3 .5-.2-5z" fill="#f5b81c" /></>) },
  { name: "Карта", art: (<>
    <path d="M4 2h24q3 0 3 4l-4 24H8z" fill="#b48a32" /><path d="M4 2h22l1 25q-12 3-23 0z" fill="#d9cba8" stroke="#9a8656" />
    <circle cx="20" cy="8" r="3" fill="#5b636e" /><circle cx="9" cy="21" r="3" fill="#5b636e" /><path d="M8 11l16 8M14 15l-3 3 11 3M16 10l-3 5" stroke="#6b6b60" strokeWidth="1.800" fill="none" /></>) },
  { name: "Chrome", run: true, art: (<>
    <circle cx="16" cy="16" r="14" fill="#fbcf2c" /><path d="M16 16L3.900 9A14 14 0 0 1 28.100 9z" fill="#dd4132" /><path d="M16 2a14 14 0 0 1 12.100 7H16z" fill="#dd4132" />
    <path d="M3.900 9A14 14 0 0 0 15 30l6-11-5-3z" fill="#21a455" /><circle cx="16" cy="16" r="6.800" fill="#fff" /><circle cx="16" cy="16" r="5.300" fill="#3a78c9" /></>) },
  { name: "Блокнот", art: (<>
    <path d="M12 3l18 1-2 25-18-4z" fill="#8b9d9b" /><path d="M12 3l17 1-8 24-19-5z" fill="#7fc6d2" /><path d="M13 5l14 1-4 11-14-3z" fill="#cfeff4" /><path d="M12 3h17" stroke="#fff" strokeWidth="3" strokeDasharray="2 1" /></>) },
  { name: "Звук", art: (<>
    <path d="M4 1h17q2 0 3 2l7 11q1 2 0 4l-7 11q-1 2-3 2H4q-3 0-3-3V4q0-3 3-3z" fill="#5795d0" stroke="#86b8e6" />
    <path d="M5 12h4l7-6v20l-7-6H5z" fill="#fff" /><path d="M19 11q3 5 0 10M22 8q5 8 0 16" stroke="#fff" strokeWidth="2" fill="none" /></>) },
  { name: "Paint", run: true, art: (<>
    <path d="M2 19C1 10 15 6 24 10c7 5 3 16-5 17-5 1-4-4-8-3-4 2-8 0-9-5z" fill="#cfe3f3" stroke="#7ba2c4" />
    <circle cx="7" cy="18" r="2.500" fill="#e2453a" /><circle cx="11" cy="13" r="2.500" fill="#4fae47" /><circle cx="18" cy="12" r="2.500" fill="#e9a62e" /><circle cx="14" cy="20" r="2.500" fill="#5f8bb5" />
    <path d="M26 9L17 30" stroke="#e08a30" strokeWidth="2.500" /><path d="M24 2l8 2-4 6-4-2z" fill="#b98a5c" /></>) },
  { name: "Internet Explorer", art: (<>
    <path d="M26.500 22a11 11 0 1 1 1.200-4.500H9" fill="none" stroke="#3db1ee" strokeWidth="5" />
    <path d="M4 28C-3 27 6 8 23 3c7-2 8 3 5 9 0-5-1-8-7-5C11 12 3 23 6 26" fill="#f7c62c" /></>) },
  { name: "Skype", run: true, art: (<>
    <circle cx="11" cy="11" r="10" fill="#14a8ea" /><circle cx="21" cy="21" r="10" fill="#14a8ea" /><circle cx="16" cy="16" r="13" fill="#14a8ea" />
    <text x="8" y="24" fontSize="23" fontWeight="bold" fill="#fff" fontFamily="Liberation Sans">S</text></>) },
  { name: "Файлы", run: true, art: (<>
    <path d="M2 1h26l3 3v27H2z" fill="#1c3fb8" stroke="#0e1f6e" /><rect x="9" y="1" width="15" height="10" fill="#c9ced8" /><rect x="17" y="2" width="4" height="8" fill="#1c3fb8" />
    <rect x="5" y="14" width="22" height="17" fill="#fff" /><path d="M7 18h18M7 22h18M7 26h18" stroke="#d22a2a" /></>) },
  { name: "FX", run: true, active: true, art: null },
  { name: "Удалённый стол", run: true, art: (<>
    <path d="M2 2l22 3v17L4 19z" fill="#d8dde4" /><path d="M4 4l18 3v12L6 17z" fill="#1233c8" /><path d="M13 5l9 2v7z" fill="#6f96ee" /><path d="M8 23l10 1 3 5-13-1z" fill="#c4cad2" />
    <circle cx="24" cy="23" r="7" fill="#e9ece9" stroke="#7d8580" /><path d="M20 22l3 2-2 4M27 19l-3 2 4 3" stroke="#2c9b3c" strokeWidth="1.800" fill="none" /></>) },
];

function Taskbar() {
  return (
    <div className="flex h-10 shrink-0 items-center border-t border-[#6c7fa6] bg-linear-to-r from-[#7388b3] via-[#7f92b7] to-[#93a1bd] font-['Noto_Sans',sans-serif] text-white">
      <button type="button" aria-label="Пуск" className="flex h-full w-[52px] shrink-0 items-center justify-center">
        <svg width="27" height="27" viewBox="0 0 27 27" fill="#fff"><path d="M0 4l11-1.500v10.200H0zM12.300 2.300L27 0v12.700H12.300zM0 14h11v10.300L0 22.700zM12.300 14H27v12.700l-14.700-2.200z" /></svg>
      </button>
      <div className="flex min-w-0 flex-1 gap-1">
        {apps.map((a) => (
          <button
            key={a.name}
            type="button"
            aria-label={a.name}
            className={
              "flex h-[38px] w-[58px] shrink-0 items-center justify-center " +
              (a.active ? "border border-[#e4e9f2] bg-[#b9c4d6]" : a.run ? "border border-[#b2bfd6] bg-[#96a5c3]" : "")
            }
          >
            {a.art ? <svg width="32" height="32" viewBox="0 0 32 32">{a.art}</svg> : <FxLogo size={32} />}
          </button>
        ))}
      </div>
      <div className="flex shrink-0 items-center gap-2">
        <svg width="9" height="5" viewBox="0 0 9 5"><path d="M0 5h9L4.500 0z" fill="#fff" /></svg>
        <svg width="17" height="17" viewBox="0 0 17 17" className="ml-1" fill="none"><path d="M2 1v15" stroke="#fff" strokeWidth="2" /><path d="M3 2h6l1 2h6v7H3z" fill="#fff" stroke="#555" /><circle cx="11.500" cy="11.500" r="5" fill="#d6302a" /><path d="M9.500 9.500l4 4M13.500 9.500l-4 4" stroke="#fff" strokeWidth="1.500" /></svg>
        <svg width="16" height="17" viewBox="0 0 16 17" fill="none"><path d="M2 2v3M5 2v3M1 5h5v4H1zM3.500 9v7" stroke="#fff" strokeWidth="1.500" /><rect x="9" y="3" width="6" height="12" stroke="#fff" strokeWidth="1.500" /><path d="M10.500 1h3" stroke="#fff" strokeWidth="2" /></svg>
        <svg width="16" height="14" viewBox="0 0 16 14" fill="#fff" stroke="#4f5b74" strokeWidth=".4"><path d="M0 10h2.500v3H0zM3.300 8h2.500v5H3.300zM6.600 6h2.500v7H6.600zM9.900 3h2.500v10H9.900zM13.200 0h2.500v13h-2.500z" /></svg>
        <svg width="15" height="16" viewBox="0 0 15 16" fill="none"><path d="M1 5h3l4-4v14l-4-4H1z" fill="#fff" /><path d="M11 5q2 3 0 6" stroke="#fff" strokeWidth="1.500" /></svg>
        <span className="ml-[6px] text-[12px]">РУС</span>
        <span className="mr-[9px] w-[74px] text-center text-[11px] leading-4">15:46<br />29.05.2015</span>
      </div>
    </div>
  );
}

export default function App() {
  return (
    <div className="flex h-screen w-full flex-col overflow-hidden bg-[#f0f0f0]">
      <TitleBar />
      <MenuBar />
      <Toolbars />
      <Chart />
      <ChartTabs />
      <Terminal />
      <StatusBar />
      <Taskbar />
    </div>
  );
}
